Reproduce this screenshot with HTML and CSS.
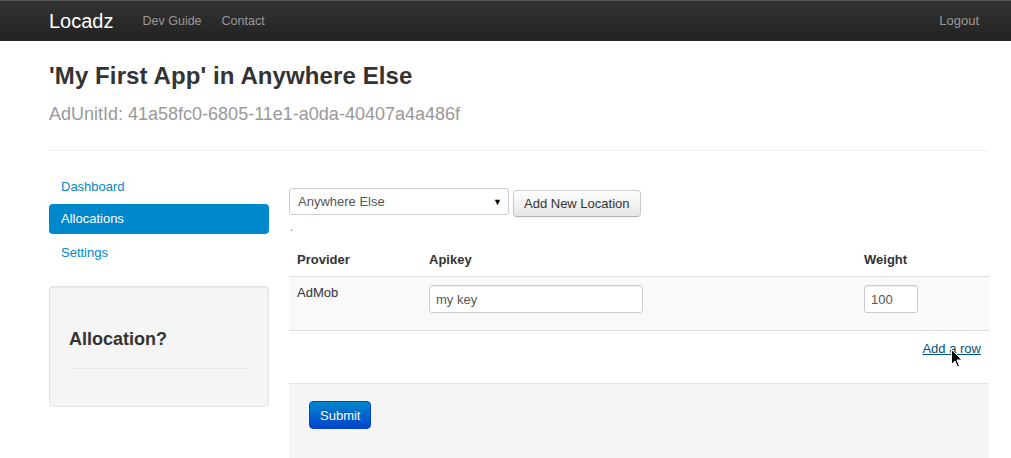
FILE: index.html
```html
<!DOCTYPE html>
<html>
<head>
<meta charset="utf-8">
<link rel="stylesheet" href="styles.css">
</head>
<body>
<div class="navbar">
  <div class="nav-inner">
    <a class="brand">Locadz</a>
    <ul class="nav">
      <li><a>Dev Guide</a></li>
      <li><a>Contact</a></li>
    </ul>
    <ul class="nav nav-right">
      <li><a>Logout</a></li>
    </ul>
  </div>
</div>
<div class="container">
  <div class="page-header">
    <h1>'My First App' in Anywhere Else</h1>
    <p class="subtitle">AdUnitId: 41a58fc0-6805-11e1-a0da-40407a4a486f</p>
  </div>
  <div class="row">
    <div class="sidebar">
      <ul class="nav-list">
        <li><a>Dashboard</a></li>
        <li class="active"><a>Allocations</a></li>
        <li><a>Settings</a></li>
      </ul>
      <div class="well">
        <h3>Allocation?</h3>
        <hr class="well-hr">
      </div>
    </div>
    <div class="main">
      <div class="loc-row">
        <div class="select">Anywhere Else<span class="caret">&#9660;</span></div>
        <button class="btn">Add New Location</button>
      </div>
      <div class="tick">`</div>
      <table class="table">
        <thead>
          <tr><th class="c1">Provider</th><th class="c2">Apikey</th><th class="c3">Weight</th></tr>
        </thead>
        <tbody>
          <tr>
            <td>AdMob</td>
            <td><input class="in-key" type="text" value="my key"></td>
            <td><input class="in-w" type="text" value="100"></td>
          </tr>
        </tbody>
      </table>
      <div class="add-row"><a class="add-link">Add a row</a>
        <svg class="cursor" width="12" height="19" viewBox="0 0 12 19"><path d="M0.5 0.5 L0.5 15.5 L4 12 L6.5 18 L8.5 17 L6 11 L11 11 Z" fill="#000" stroke="#fff" stroke-width="1"/></svg>
      </div>
      <div class="form-actions">
        <button class="btn-primary">Submit</button>
      </div>
    </div>
  </div>
</div>
</body>
</html>
```
FILE: styles.css
```css
* { box-sizing: border-box; }
html, body { margin: 0; padding: 0; }
body {
  font-family: "Liberation Sans", Arial, sans-serif;
  font-size: 13px;
  line-height: 18px;
  color: #333;
  background: #fff;
  overflow: hidden;
}
.navbar {
  height: 41px;
  background: linear-gradient(#333333, #222222);
  border-top: 1px solid #555;
}
.nav-inner {
  width: 940px;
  margin-left: 49px;
  display: flex;
  align-items: center;
  height: 40px;
}
.brand {
  color: #fff;
  font-size: 20px;
  font-weight: normal;
  margin-right: 19px;
}
.nav { list-style: none; margin: 0; padding: 0; display: flex; }
.nav li a {
  color: #999;
  font-size: 12.5px;
  padding: 0 10px;
  display: block;
}
.nav-right { margin-left: auto; }
.nav-right li a { font-size: 13px; }
.container {
  width: 940px;
  margin-left: 49px;
}
.page-header {
  padding-top: 20px;
  padding-bottom: 26px;
  border-bottom: 1px solid #eee;
  margin-bottom: 20px;
}
h1 {
  margin: 0;
  font-size: 24px;
  line-height: 30px;
  font-weight: bold;
  color: #333;
  letter-spacing: 0.1px;
}
.subtitle {
  margin: 13px 0 0;
  font-size: 18px;
  line-height: 20px;
  color: #999;
}
.row { display: flex; gap: 20px; }
.sidebar { width: 220px; }
.main { width: 700px; padding-top: 17px; }
.nav-list { list-style: none; margin: 0; padding: 0; }
.nav-list li a {
  display: block;
  padding: 0 12px;
  height: 30px;
  line-height: 31px;
  margin-bottom: 3px;
  color: #0088cc;
  font-size: 13px;
  border-radius: 4px;
}
.nav-list li.active a {
  background: #0088cc;
  color: #fff;
  line-height: 30px;
}
.well {
  margin-top: 19px;
  background: #f5f5f5;
  border: 1px solid #e3e3e3;
  border-radius: 4px;
  padding: 19px 19px 0;
  height: 121px;
  box-shadow: inset 0 1px 1px rgba(0,0,0,0.05);
}
.well h3 {
  margin: 21px 0 0;
  font-size: 18px;
  line-height: 24px;
  font-weight: bold;
  color: #333;
}
.well-hr { border: 0; border-top: 1px solid #e6e6e6; margin: 17px 0 0; }
.loc-row { display: flex; align-items: flex-start; gap: 4px; }
.select {
  width: 220px;
  height: 27px;
  border: 1px solid #ccc;
  border-radius: 3px;
  background: #fff;
  padding: 4px 8px;
  color: #555;
  font-size: 13px;
  line-height: 17px;
  position: relative;
}
.caret { position: absolute; right: 6px; top: 5px; font-size: 9px; color: #000; }
.btn {
  margin-top: 2px;
  height: 27px;
  padding: 4px 10px;
  font-family: inherit;
  font-size: 13px;
  color: #333;
  background: linear-gradient(#ffffff, #e6e6e6);
  border: 1px solid #ccc;
  border-bottom-color: #b3b3b3;
  border-radius: 4px;
  box-shadow: inset 0 1px 0 rgba(255,255,255,0.2), 0 1px 2px rgba(0,0,0,0.05);
}
.tick { height: 25px; font-size: 10px; line-height: 12px; color: #666; padding-left: 1px; padding-top: 12px; }
.table { width: 100%; border-collapse: collapse; }
.table th {
  text-align: left;
  font-weight: bold;
  padding: 9px 8px 7px;
  line-height: 18px;
  border-bottom: 1px solid #ddd;
  vertical-align: bottom;
}
.c1 { width: 132px; }
.c3 { width: 133px; }
.table td {
  background: #f9f9f9;
  padding: 8px 8px 17px;
  vertical-align: top;
  line-height: 18px;
  border-bottom: 1px solid #ddd;
}
.table td:first-child { padding-top: 7px; }
input {
  font-family: inherit;
  font-size: 13px;
  color: #555;
  height: 28px;
  border: 1px solid #ccc;
  border-radius: 3px;
  padding: 4px 6px;
  background: #fff;
  box-shadow: inset 0 1px 1px rgba(0,0,0,0.075);
  display: block;
}
.in-key { width: 214px; }
.in-w { width: 54px; }
.add-row {
  position: relative;
  height: 52px;
  text-align: right;
  padding-top: 9px;
  padding-right: 8px;
}
.add-link { color: #005580; text-decoration: underline; font-size: 13px; }
.cursor { position: absolute; left: 662px; top: 18px; }
.form-actions {
  background: #f5f5f5;
  border-top: 1px solid #e5e5e5;
  padding: 17px 20px 40px;
  height: 80px;
}
.btn-primary {
  font-family: inherit;
  font-size: 13px;
  color: #fff;
  height: 28px;
  padding: 4px 10px;
  background: linear-gradient(#0088cc, #0044cc);
  border: 1px solid #0044cc;
  border-radius: 4px;
  text-shadow: 0 -1px 0 rgba(0,0,0,0.25);
}
```
